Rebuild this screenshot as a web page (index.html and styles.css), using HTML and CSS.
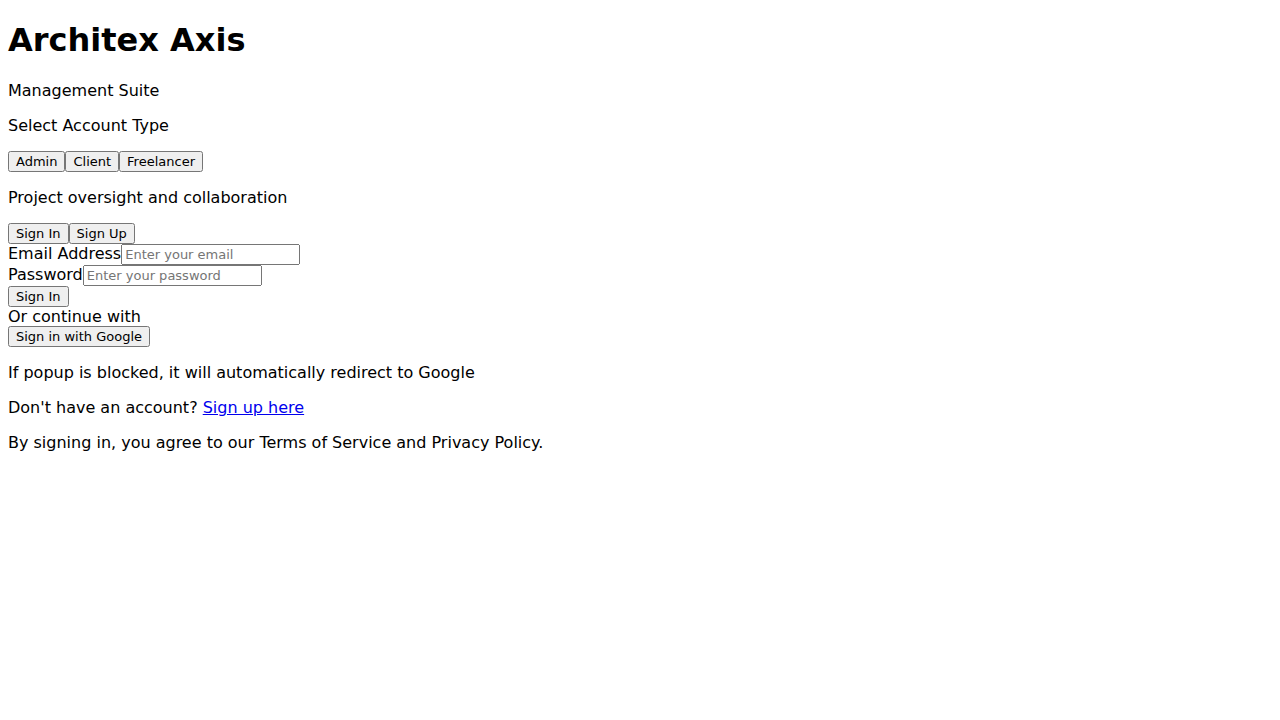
FILE: index.html
```html
<!DOCTYPE html>
<html>
<head>
<meta charset="utf-8">
<title>Architex Axis</title>
<link rel="stylesheet" href="styles.css">
</head>
<body class="page">
<h1 class="title">Architex Axis</h1>
<p>Management Suite</p>
<p>Select Account Type</p>
<div class="row">
<button class="btn">Admin</button><button class="btn">Client</button><button class="btn">Freelancer</button>
</div>
<p>Project oversight and collaboration</p>
<div class="row">
<button class="btn">Sign In</button><button class="btn">Sign Up</button>
</div>
<form class="form">
<div><label>Email Address</label><input class="field" type="email" placeholder="Enter your email"></div>
<div><label>Password</label><input class="field" type="password" placeholder="Enter your password"></div>
<button class="btn" type="button">Sign In</button>
</form>
<div>Or continue with</div>
<button class="btn">Sign in with Google</button>
<p>If popup is blocked, it will automatically redirect to Google</p>
<p>Don't have an account? <a href="#" class="link">Sign up here</a></p>
<p>By signing in, you agree to our Terms of Service and Privacy Policy.</p>
</body>
</html>
```
FILE: styles.css
```css
.page {
  font-family: "DejaVu Sans", sans-serif;
  margin-top: 0;
}
.title {
  margin-top: 21.44px;
}
.btn {
  font-family: "DejaVu Sans", sans-serif;
  font-size: 13px;
}
.field {
  font-family: "DejaVu Sans", sans-serif;
  font-size: 13px;
  box-sizing: border-box;
  width: 179px;
  height: 21px;
}
.form {
  margin: 0;
}
.link {
  color: #0000ee;
}
```
